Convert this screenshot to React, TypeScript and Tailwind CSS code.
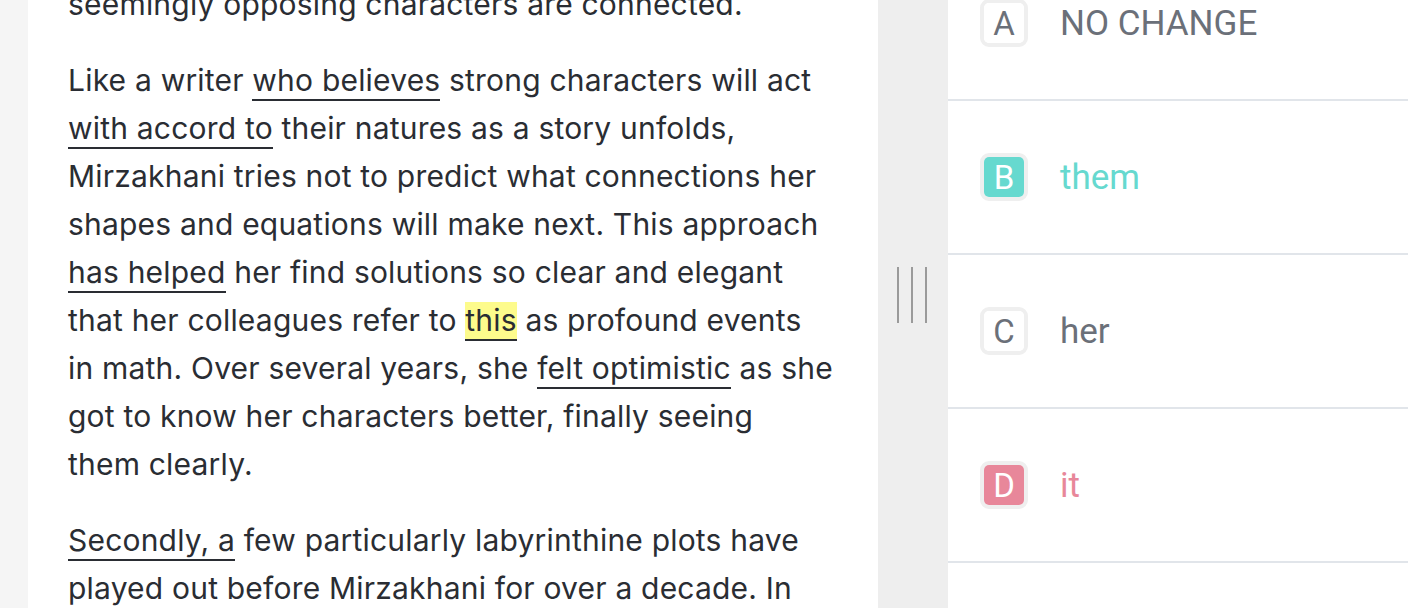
import React from "react";

const U = ({ children, hl = false }: { children: React.ReactNode; hl?: boolean }) => (
  <span className={`border-b-2 border-[#2a2d33] pb-[1px] ${hl ? "bg-[#fdfb8c]" : ""}`}>{children}</span>
);

const Option = ({
  letter,
  text,
  variant,
}: {
  letter: string;
  text: string;
  variant: "plain" | "teal" | "pink";
}) => {
  const fill =
    variant === "teal" ? "bg-[#66d9cf] text-white" : variant === "pink" ? "bg-[#e8879a] text-white" : "bg-white text-[#6b7079]";
  const txt = variant === "teal" ? "text-[#66d9cf]" : variant === "pink" ? "text-[#e8879a]" : "text-[#6b7079]";
  return (
    <div className="h-[154px] border-b-2 border-[#e1e5ea] flex items-center pl-[32px]">
      <div className="w-[48px] h-[48px] border-[4px] border-[#efefef] rounded-[9px] flex">
        <div className={`flex-1 rounded-[5px] flex items-center justify-center text-[33px] leading-none ${fill}`}>
          {letter}
        </div>
      </div>
      <div className={`ml-[32px] text-[35px] leading-none ${txt}`}>{text}</div>
    </div>
  );
};

export default function App() {
  return (
    <div className="w-[1408px] h-[608px] overflow-hidden flex bg-white" style={{ fontFamily: "Inter, 'Noto Sans', sans-serif" }}>
      <div className="w-[28px] bg-[#f5f5f5] shrink-0" />
      <div className="w-[850px] shrink-0 bg-white pl-[40px] text-[30px] tracking-[0.2px] leading-[48px] text-[#2a2d33] whitespace-nowrap">
        <div className="-mt-[20px]">
          <p>seemingly opposing characters are connected.</p>
          <p className="mt-[28px]">
            Like a writer <U>who believes</U> strong characters will act
            <br />
            <U>with accord to</U> their natures as a story unfolds,
            <br />
            Mirzakhani tries not to predict what connections her
            <br />
            shapes and equations will make next. This approach
            <br />
            <U>has helped</U> her find solutions so clear and elegant
            <br />
            that her colleagues refer to <U hl>this</U> as profound events
            <br />
            in math. Over several years, she <U>felt optimistic</U> as she
            <br />
            got to know her characters better, finally seeing
            <br />
            them clearly.
          </p>
          <p className="mt-[28px]">
            <U>Secondly, a</U> few particularly labyrinthine plots have
            <br />
            played out before Mirzakhani for over a decade. In
          </p>
        </div>
      </div>
      <div className="w-[70px] shrink-0 bg-[#eeeeee] flex items-center justify-center">
        <div className="flex gap-[12px] mt-[-18px] -ml-[2px]">
          <div className="w-[2px] h-[56px] bg-[#9a9a9a]" />
          <div className="w-[2px] h-[56px] bg-[#9a9a9a]" />
          <div className="w-[2px] h-[56px] bg-[#9a9a9a]" />
        </div>
      </div>
      <div className="flex-1 bg-white" style={{ fontFamily: "Roboto, 'Liberation Sans', sans-serif" }}>
        <div className="-mt-[53px]">
          <Option letter="A" text="NO CHANGE" variant="plain" />
          <Option letter="B" text="them" variant="teal" />
          <Option letter="C" text="her" variant="plain" />
          <Option letter="D" text="it" variant="pink" />
        </div>
      </div>
    </div>
  );
}
